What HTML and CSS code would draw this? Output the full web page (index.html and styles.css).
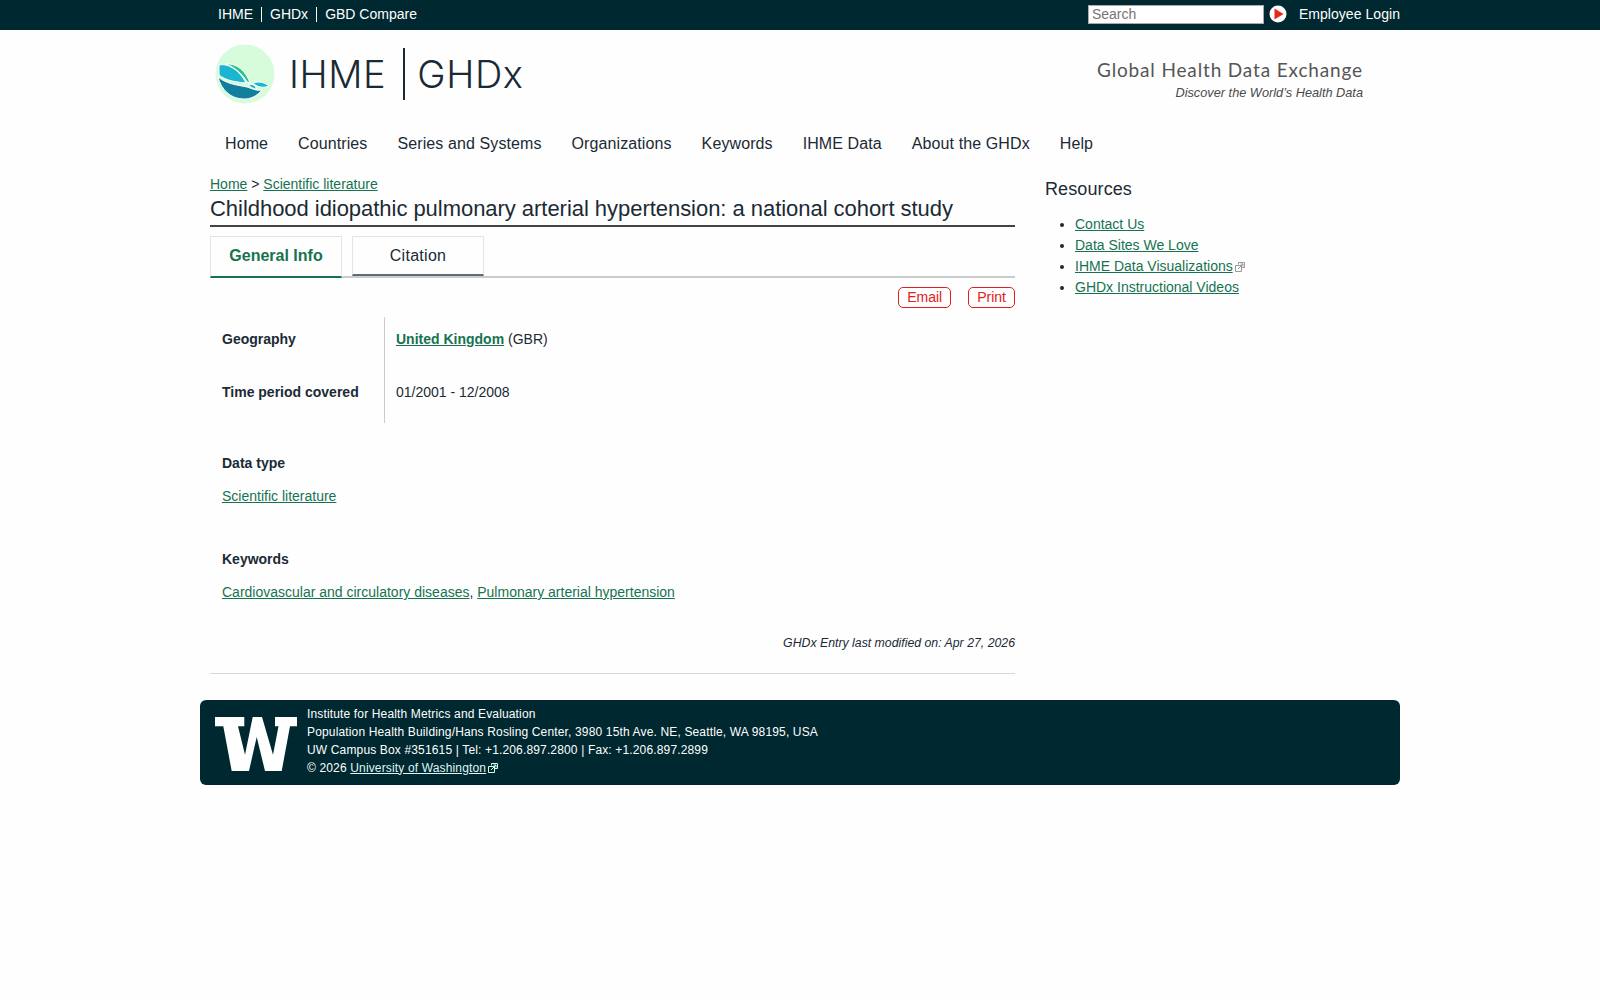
FILE: index.html
```html
<!DOCTYPE html>
<html>
  <head>
    <title>Childhood idiopathic pulmonary arterial hypertension: a national cohort study | GHDx</title>
    <link rel="stylesheet" href="styles.css">
  </head>
  <body>
    <div class="topbar">
      <div class="topbar-inner">
        <ul class="toplinks">
          <li><a href="#">IHME</a></li>
          <li><a href="#">GHDx</a></li>
          <li><a href="#">GBD Compare</a></li>
        </ul>
        <div class="topright">
          <input class="search" type="text" placeholder="Search">
          <svg class="go" width="18" height="18" viewBox="0 0 18 18">
            <circle cx="9" cy="9" r="8.5" fill="#fff"/>
            <path d="M5.5 3.5 L14.5 9 L5.5 14.5 Z" fill="#e8281c"/>
          </svg>
          <a class="login" href="#">Employee Login</a>
        </div>
      </div>
    </div>

    <div class="page">
      <div class="header">
        <div class="brand">
          <svg class="logo" width="60" height="60" viewBox="0 0 60 60">
            <circle cx="30" cy="30" r="29.5" fill="#d6fcdc"/>
            <g stroke="#fff" stroke-width="1">
              <path d="M3 33 C12 40 22 41 32 43 C38 45 42 47 47 46 C41 53 35 55 29 55 C15 55 6 45 3 33 Z" fill="#12809c"/>
              <path d="M4 21 C14 19 25 27 31 39 C22 38 11 37 4 31 Z" fill="#1ab6cf"/>
              <path d="M11 20 C22 19 31 27 35 39 L32 38 C28 31 21 24 11 20 Z" fill="#2fc48c"/>
              <path d="M38 39 C43 37 49 38 54 42 C49 44 43 44 38 39 Z" fill="#1ab6cf"/>
              <path d="M33 40 L39 41 L42 45 C38 45 35 43 33 40 Z" fill="#1ab6cf"/>
            </g>
          </svg>
          <span class="brand-name">IHME</span>
          <span class="brand-sep"></span>
          <span class="brand-name">GHDx</span>
        </div>
        <div class="tagline">
          <div class="tagline-title">Global Health Data Exchange</div>
          <div class="tagline-sub">Discover the World’s Health Data</div>
        </div>
      </div>

      <ul class="nav">
        <li><a href="#">Home</a></li>
        <li><a href="#">Countries</a></li>
        <li><a href="#">Series and Systems</a></li>
        <li><a href="#">Organizations</a></li>
        <li><a href="#">Keywords</a></li>
        <li><a href="#">IHME Data</a></li>
        <li><a href="#">About the GHDx</a></li>
        <li><a href="#">Help</a></li>
      </ul>

      <div class="columns">
        <div class="main">
          <div class="breadcrumb"><a href="#">Home</a> &gt; <a href="#">Scientific literature</a></div>
          <h1 class="title">Childhood idiopathic pulmonary arterial hypertension: a national cohort study</h1>

          <div class="tabs">
            <a class="tab active" href="#">General Info</a>
            <a class="tab" href="#">Citation</a>
          </div>

          <div class="actions">
            <a class="action" href="#">Email</a>
            <a class="action" href="#">Print</a>
          </div>

          <div class="facts">
            <div class="fact-labels">
              <div class="fact-label">Geography</div>
              <div class="fact-label">Time period covered</div>
            </div>
            <div class="fact-values">
              <div class="fact-value"><a class="strong-link" href="#">United Kingdom</a> (GBR)</div>
              <div class="fact-value">01/2001 - 12/2008</div>
            </div>
          </div>

          <div class="field">
            <div class="field-label">Data type</div>
            <div class="field-value"><a href="#">Scientific literature</a></div>
          </div>

          <div class="field">
            <div class="field-label">Keywords</div>
            <div class="field-value"><a href="#">Cardiovascular and circulatory diseases</a>, <a href="#">Pulmonary arterial hypertension</a></div>
          </div>

          <div class="modified">GHDx Entry last modified on: Apr 27, 2026</div>
        </div>

        <div class="side">
          <h2 class="side-title">Resources</h2>
          <ul class="side-list">
            <li><a href="#">Contact Us</a></li>
            <li><a href="#">Data Sites We Love</a></li>
            <li><a href="#">IHME Data Visualizations</a><svg class="ext" width="10" height="10" viewBox="0 0 10 10"><path d="M3.5 2.5 V0.5 H9.5 V5.5 H6.5 M0.5 3.5 H6.5 V9.5 H0.5 Z M3 7 L8 2 M5.5 2 H8 V4.5" fill="none" stroke="#999" stroke-width="1"/></svg></li>
            <li><a href="#">GHDx Instructional Videos</a></li>
          </ul>
        </div>
      </div>

      <div class="footer">
        <svg class="uw" width="82" height="54" viewBox="0 0 82 54">
          <path d="M0 0 H29.300 V9.300 H23 L30 37.700 L37.700 0 H47 L58 37.700 L63.500 9.300 H60 V0 H82 V9.300 H75 L66.700 54 H50 L41.700 20 L34 54 H16.700 L8.300 9.300 H0 Z" fill="#fff"/>
        </svg>
        <div class="footer-text">
          <div>Institute for Health Metrics and Evaluation</div>
          <div>Population Health Building/Hans Rosling Center, 3980 15th Ave. NE, Seattle, WA 98195, USA</div>
          <div>UW Campus Box #351615 | Tel: +1.206.897.2800 | Fax: +1.206.897.2899</div>
          <div>© 2026 <a href="#">University of Washington</a><svg class="ext" width="10" height="10" viewBox="0 0 10 10"><path d="M3.5 2.5 V0.5 H9.5 V5.5 H6.5 M0.5 3.5 H6.5 V9.5 H0.5 Z M3 7 L8 2 M5.5 2 H8 V4.5" fill="none" stroke="#cfe" stroke-width="1"/></svg></div>
        </div>
      </div>
    </div>
  </body>
</html>
```

FILE: styles.css
```css
body {
  margin: 0;
  background-color: #fefefe;
  color: #1b2a35;
  font-family: "Liberation Sans", Arial, sans-serif;
  font-size: 14px;
}
a {
  color: #167350;
}
ul {
  margin: 0;
  padding: 0;
}

.topbar {
  height: 30px;
  background-color: #002830;
}
  .topbar-inner {
    width: 1200px;
    height: 28px;
    margin: 0 auto;
    display: flex;
    justify-content: space-between;
    align-items: center;
  }
  .toplinks {
    display: flex;
    list-style: none;
    padding-left: 10px;
  }
  .toplinks li {
    padding: 0 8px;
    border-left: 1px solid #fff;
    line-height: 15px;
  }
  .toplinks li:first-child {
    border-left: 0;
  }
  .toplinks a,
  .login {
    color: #fff;
    font-size: 14px;
    text-decoration: none;
  }
  .login {
    letter-spacing: 0.05px;
  }
  .topright {
    display: flex;
    align-items: center;
  }
  .search {
    box-sizing: border-box;
    width: 176px;
    height: 19px;
    margin: 0;
    padding: 0 3px;
    border: 1px solid #aaa;
    background-color: #fff;
    font-family: "Liberation Sans", Arial, sans-serif;
    font-size: 14px;
  }
  .go {
    margin-left: 5px;
    margin-right: 12px;
  }

.page {
  width: 1200px;
  margin: 0 auto;
}

.header {
  height: 99px;
  padding: 0 37px 0 15px;
  display: flex;
  justify-content: space-between;
}
  .brand {
    display: flex;
    align-items: center;
    height: 60px;
    margin-top: 14px;
  }
  .brand-name {
    font-family: Inter, sans-serif;
    font-size: 38px;
    font-weight: 300;
    letter-spacing: 0.6px;
    color: #1a2a35;
  }
  .logo {
    margin-right: 14px;
  }
  .brand-sep {
    width: 2px;
    height: 52px;
    margin: 0 12px 0 17px;
    background-color: #1a2a35;
  }
  .tagline {
    margin-top: 28px;
    text-align: right;
  }
  .tagline-title {
    font-family: Lato, sans-serif;
    font-size: 19px;
    line-height: 23px;
    color: #555;
    letter-spacing: 0.85px;
  }
  .tagline-sub {
    margin-top: 4px;
    font-size: 12.750px;
    font-style: italic;
    color: #4a4a4a;
  }

.nav {
  display: flex;
  list-style: none;
  padding: 0 10px;
  height: 30px;
}
  .nav li {
    padding: 0 15px;
    line-height: 30px;
  }
  .nav a {
    color: #1b2a35;
    font-size: 16px;
    letter-spacing: 0.1px;
    text-decoration: none;
  }

.columns {
  display: flex;
  padding: 0 10px;
  margin-top: 16px;
}
.main {
  width: 805px;
}
.side {
  margin-left: 30px;
  padding-top: 2px;
}

.breadcrumb {
  font-size: 14px;
  line-height: 18px;
}
.title {
  margin: 0;
  height: 32px;
  border-bottom: 2px solid #444;
  font-size: 22px;
  font-weight: normal;
  letter-spacing: -0.04px;
  line-height: 32px;
}

.tabs {
  display: flex;
  height: 40px;
  margin-top: 9px;
  border-bottom: 2px solid #ccc;
}
  .tab {
    box-sizing: border-box;
    width: 132px;
    height: 40px;
    margin-right: 10px;
    border: 1px solid #e4e4e4;
    border-bottom: 2px solid #5d6b75;
    color: #1b2a35;
    font-size: 16px;
    letter-spacing: 0.3px;
    line-height: 38px;
    text-align: center;
    text-decoration: none;
  }
  .tab.active {
    height: 42px;
    border-bottom-color: #167350;
    color: #167350;
    font-weight: bold;
    letter-spacing: 0;
  }

.actions {
  display: flex;
  justify-content: flex-end;
  margin-top: 9px;
}
  .action {
    box-sizing: border-box;
    height: 21px;
    margin-left: 17px;
    padding: 0 8px;
    border: 1px solid #e02020;
    border-radius: 5px;
    color: #e02020;
    font-size: 14px;
    line-height: 19px;
    text-decoration: none;
  }

.facts {
  display: flex;
  margin-top: 9px;
}
  .fact-labels {
    width: 162px;
    padding-left: 12px;
    border-right: 1px solid #ccc;
  }
  .fact-values {
    padding-left: 11px;
  }
  .fact-label,
  .fact-value {
    height: 53px;
    line-height: 45px;
  }
  .fact-label {
    font-weight: bold;
  }
  .strong-link {
    font-weight: bold;
  }

.field {
  padding: 0 0 14px 12px;
  margin-top: 31px;
}
  .field-label {
    font-weight: bold;
    line-height: 18px;
  }
  .field-value {
    margin-top: 15px;
    line-height: 18px;
  }

.modified {
  margin-top: 19px;
  padding-bottom: 21px;
  border-bottom: 1px solid #d8d8d8;
  font-size: 12.300px;
  font-style: italic;
  line-height: 18px;
  text-align: right;
}

.side-title {
  margin: 0;
  font-size: 18px;
  font-weight: normal;
  letter-spacing: 0.1px;
  line-height: 24px;
}
.side-list {
  margin-top: 13px;
  padding-left: 30px;
}
  .side-list li {
    line-height: 21px;
  }
  .ext {
    margin-left: 2px;
    vertical-align: -1px;
  }

.footer {
  display: flex;
  align-items: center;
  height: 85px;
  margin-top: 26px;
  padding-left: 15px;
  border-radius: 6px;
  background-color: #002830;
  color: #fff;
}
  .uw {
    flex-shrink: 0;
    margin-top: 3px;
  }
  .footer-text {
    margin-left: 10px;
    padding-bottom: 4px;
    font-size: 12px;
    letter-spacing: 0.15px;
    line-height: 18px;
  }
  .footer-text a {
    color: #dff6f4;
  }
```
